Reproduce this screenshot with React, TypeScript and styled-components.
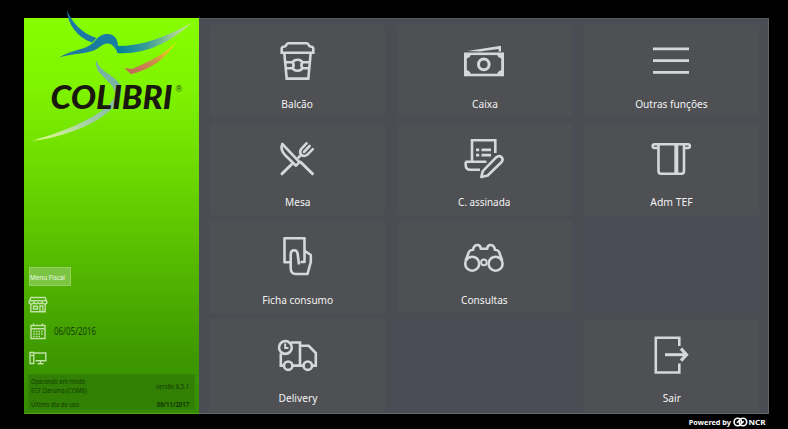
import React from "react";
import styled, { createGlobalStyle } from "styled-components";

const Global = createGlobalStyle`
  * { box-sizing: border-box; }
  body { margin: 0; background: #000; font-family: "Noto Sans", "Open Sans", sans-serif; overflow: hidden; }
`;

const Screen = styled.div`
  width: 788px;
  height: 429px;
  padding: 18px 19px 0 24px;
  background: #000;
  display: flex;
  flex-direction: column;
`;

const Main = styled.main`
  display: flex;
  height: 396px;
`;

const Sidebar = styled.aside`
  position: relative;
  width: 175px;
  height: 396px;
  padding: 249px 4px 3px;
  display: flex;
  flex-direction: column;
  background: linear-gradient(#86fe00 0%, #7ff300 18%, #6bd800 40%, #55b900 62%, #3f9b00 84%, #348b00 100%);
  border-bottom: 1px solid #55a51c;
`;

const Logo = styled.svg`
  position: absolute;
  left: 0;
  top: -18px;
`;

const FiscalButton = styled.button`
  width: 42px;
  height: 19px;
  margin-left: 1px;
  padding: 2px 0 0;
  border: 1px solid #93d35e;
  background: #7cc444;
  color: #eefbe2;
  font: 6.8px "Noto Sans", sans-serif;
  line-height: 15px;
  text-align: left;
  white-space: nowrap;
`;

const StatusList = styled.div`
  display: flex;
  flex-direction: column;
  margin-top: 4px;
  height: 85px;
`;

const StatusRow = styled.div`
  display: flex;
  align-items: center;
  height: 27px;
  gap: 6px;
`;

const StatusIcon = styled.svg`
  width: 20px;
  height: 20px;
  fill: none;
  stroke: #bfe2a5;
  stroke-width: 1.4;
`;

const Fit = styled.span<{ $x: number; $origin?: string }>`
  display: inline-block;
  white-space: nowrap;
  transform: scaleX(${(p) => p.$x});
  transform-origin: ${(p) => p.$origin ?? "left"} center;
`;

const DateText = styled.div`
  font-size: 10.5px;
  line-height: 12px;
  color: #153d05;
`;

const Info = styled.section`
  width: 167px;
  height: 36px;
  padding: 2px 5px 0 2px;
  background: #317f05;
  border: 1px solid #348609;
  color: #123c02;
  font-size: 7.8px;
  line-height: 9px;
  display: flex;
  flex-direction: column;
  gap: 5px;
`;

const InfoRow = styled.div`
  display: flex;
  align-items: center;
  justify-content: space-between;
`;

const Menu = styled.nav`
  width: 570px;
  height: 396px;
  padding: 6px 10px 6px 11px;
  display: grid;
  grid-template-columns: repeat(3, 175px);
  grid-template-rows: repeat(4, 92px);
  column-gap: 12px;
  row-gap: 6px;
  background: #4b4d54;
  border-top: 1px solid #56575a;
  border-right: 1px solid #62636a;
  border-bottom: 1px solid #66676b;
`;

const Tile = styled.button`
  display: flex;
  flex-direction: column;
  align-items: center;
  padding: 12px 0 0;
  border: 0;
  background: #4f5053;
  color: #f3f3f4;
  font: 11px "Noto Sans", sans-serif;
`;

const EmptyCell = styled.div`
  background: #4a4d56;
`;

const TileIcon = styled.svg`
  width: 49px;
  height: 48px;
  flex: none;
  fill: none;
  stroke: #d6d7d9;
  stroke-width: 2.6;
`;

const TileLabel = styled.span`
  margin-top: 11px;
  line-height: 15px;
`;

const Footer = styled.footer`
  display: flex;
  justify-content: flex-end;
  align-items: center;
  height: 15px;
  padding: 1px 3px 0 0;
  color: #fff;
  font: bold 7.3px "Noto Sans", sans-serif;
  gap: 2px;
`;

type Item = { label: string; fit: number; icon: React.ReactNode } | null;

const items: Item[] = [
  {
    label: "Balcão",
    fit: 0.92,
    icon: (
      <>
        <path d="M8.7 15.7V11.5Q8.8 9.8 11.5 9.5Q13.2 9 13.8 7.2Q14.3 6.2 15.5 6.2H33.5Q34.7 6.2 35.2 7.2Q35.8 9 37.5 9.5Q40.2 9.8 40.3 11.5V15.7Z" />
        <path d="M11.3 16L13.7 41.6H35.3L37.7 16M12.5 25.2H19.6Q21 22.7 24.5 22.7T29.4 25.2H36.5M13.2 31.2H19.6Q21 33.7 24.5 33.7T29.4 31.2H36" />
        <path d="M19.6 25.2Q21.7 28.2 19.6 31.2M29.4 25.2Q27.3 28.2 29.4 31.2" />
      </>
    ),
  },
  {
    label: "Caixa",
    fit: 0.92,
    icon: (
      <>
        <rect x="5.3" y="16.8" width="37.4" height="21.2" />
        <path d="M5 16H11Q11 20.5 6.5 21.5V33Q11 34 11 38.5H5ZM43 16H37Q37 20.5 41.5 21.5V33Q37 34 37 38.5H43Z" fill="#d6d7d9" stroke="none" />
        <circle cx="23.8" cy="27.4" r="5.3" strokeWidth="3" />
        <path d="M7.5 14L41 8.8V14.4H38.6V12L20 14.4Z" fill="#d6d7d9" stroke="none" />
      </>
    ),
  },
  { label: "Outras funções", fit: 0.92, icon: <path d="M6 11.8H42M6 23.6H42M6 35.3H42" strokeWidth="2.8" /> },
  {
    label: "Mesa",
    fit: 0.92,
    icon: (
      <g strokeLinecap="round" strokeLinejoin="round">
        <path d="M9.3 9C7.5 13 9 17 12.5 20.5L23 30.7L26.5 27.2Z" />
        <path d="M27.5 27L39.5 38.7M9 38.8L18.5 29.5" strokeWidth="3" />
        <path d="M33.5 8.3L28.3 13.8Q26 17 28.3 19.7Q31 22.2 34.2 19.8L39.8 14.2M36.6 11L31 17M27.5 20.5L25.5 22.5" />
      </g>
    ),
  },
  {
    label: "C. assinada",
    fit: 0.9,
    icon: (
      <>
        <path d="M12 26.8V5.2H35.3V18M5.5 26.8H26.5M5.7 26.8V30Q5.7 34.8 10.5 34.8H20" />
        <path d="M16 14.8H19.2M21.5 14.8H31M16 20.2H19.2M21.5 20.2H31" strokeWidth="2.8" />
        <path d="M21.3 42L22.8 36.2L36.4 22.2Q38.8 20 41.4 22Q43.7 24.4 41.6 27L27.7 40.5Z" strokeLinejoin="round" />
      </>
    ),
  },
  {
    label: "Adm TEF",
    fit: 0.94,
    icon: (
      <>
        <path d="M11 13H7.5Q5.5 13 5.7 11Q5.7 9.3 7.5 9.3H41Q42.8 9.3 42.8 11Q43 13 41 13H37.5M11.5 10V36Q11.5 38.7 14 38.7H34.5Q37 38.7 37 36V10" />
        <path d="M29.3 10V38" strokeWidth="4" />
      </>
    ),
  },
  {
    label: "Ficha consumo",
    fit: 0.915,
    icon: (
      <g strokeLinejoin="round">
        <path d="M17 29.2H11.5V5.3H31.5V29H27.5" />
        <path d="M26 31.5L24.6 20.5Q24 17.3 21 17.3Q18 17.3 17.7 21V35Q17.7 41 22.5 41H34.5L37.8 29V22L32 18" />
      </g>
    ),
  },
  {
    label: "Consultas",
    fit: 0.92,
    icon: (
      <>
        <circle cx="12.2" cy="30.7" r="7" />
        <circle cx="35.6" cy="30.7" r="7" />
        <circle cx="23.9" cy="29.4" r="2.8" strokeWidth="2" />
        <path d="M5.6 27.5L9 18.8Q10.2 16.8 13 16.8Q13.9 12 17.5 12Q20.5 12 20.9 15.7H27.1Q27.5 12 30.5 12Q34.1 12 35 16.8Q37.8 16.8 39 18.8L42.2 27.5" />
      </>
    ),
  },
  null,
  {
    label: "Delivery",
    fit: 0.93,
    icon: (
      <>
        <circle cx="12.4" cy="16.5" r="6.4" />
        <circle cx="15.2" cy="34.7" r="4.2" />
        <circle cx="34.8" cy="34.7" r="4.2" />
        <path d="M12.2 12.5V17H15.5" strokeWidth="2" />
        <path d="M18 11.5H27V34.5M27 14.8H35.7L42.8 22V34.6H39.5M7.8 22.5V34.6H11M19.5 34.6H30.5" />
      </>
    ),
  },
  null,
  {
    label: "Sair",
    fit: 0.92,
    icon: (
      <>
        <path d="M32.3 15V6.7H8.8V41.5H32.3V32.5" />
        <path d="M18 23.7H38" strokeWidth="3" />
        <path d="M34 17.7L39.5 23.7L34 29.7" strokeWidth="3.2" />
      </>
    ),
  },
];

function ColibriLogo() {
  return (
    <Logo width="175" height="150" viewBox="24 0 175 150">
      <defs>
        <linearGradient id="wing" x1="0" x2="1">
          <stop offset="0" stopColor="#007f9b" />
          <stop offset="0.4" stopColor="#3a9d98" />
          <stop offset="0.75" stopColor="#a0cc96" />
          <stop offset="1" stopColor="#c6f08e" />
        </linearGradient>
        <linearGradient id="flame" x1="0" x2="1" y1="1" y2="0">
          <stop offset="0" stopColor="#bf625d" />
          <stop offset="0.5" stopColor="#cf8f48" />
          <stop offset="1" stopColor="#fff000" />
        </linearGradient>
        <linearGradient id="tail" x1="0.8" x2="0" y1="0" y2="1">
          <stop offset="0" stopColor="#6fae9f" />
          <stop offset="0.5" stopColor="#9ccaa8" />
          <stop offset="1" stopColor="#e8ff90" />
        </linearGradient>
        <linearGradient id="beak" x1="0" x2="1">
          <stop offset="0" stopColor="#2377a0" />
          <stop offset="1" stopColor="#167ea2" />
        </linearGradient>
      </defs>
      <path d="M67 10C71 21 82 34 96.5 38L92 42.5C77 37 68 25 67 10Z" fill="#1c76a6" />
      <path d="M59 57.5C73 49 87 50 94 42C99 35.5 104 33 110 34.3C118 36.5 118.5 44 118 52.5L115.5 49C111 41 104 42.5 99 47.5C91 54 80 52 59 57.5Z" fill="url(#beak)" />
      <path d="M117 46C142 46 164 38 192 22.5C169 44 143 55 117 53Z" fill="url(#wing)" />
      <path d="M124.5 68L132 69C151 61 165 54 176.5 41.5C165 59.5 151 69 131 74.3Z" fill="url(#flame)" />
      <path d="M96.5 60C100 74 118 75 121 87.5C124 112 77 136 32 140.8C73 129 108 112 114.5 97C119 82 92 76 96.5 60Z" fill="url(#tail)" />
      <text x="50.5" y="109" fontFamily="Lato, sans-serif" fontWeight="900" fontStyle="italic" fontSize="32" textLength="122" lengthAdjust="spacingAndGlyphs" fill="#1a180e">
        COLIBRI
      </text>
      <text x="175.8" y="91.5" fontFamily="Liberation Sans" fontSize="8.5" fill="#22400b">®</text>
    </Logo>
  );
}

export default function App() {
  return (
    <>
      <Global />
      <Screen>
        <Main>
          <Sidebar>
            <ColibriLogo />
            <FiscalButton><Fit $x={0.93}>Menu Fiscal</Fit></FiscalButton>
            <StatusList>
              <StatusRow>
                <StatusIcon viewBox="0 0 20 20">
                  <path d="M3 3.5H17L19 8Q19 10 16.5 10Q14.5 10 14 8.5Q12 11 10 8.7Q8 11 6 8.5Q5.5 10 3.5 10Q1 10 1 8ZM2 6.7H18M2.8 10V17.7H17.2V10M5.5 12.2H9.5V15H5.5ZM12 17V12H14.8V17" />
                </StatusIcon>
              </StatusRow>
              <StatusRow>
                <StatusIcon viewBox="0 0 20 20">
                  <path d="M3 4.5H17V17.5H3ZM3 7.7H17M5.5 2.5V5M14.5 2.5V5" />
                  <path d="M5.2 10.5H15M5.2 13H15M5.2 15.4H12" strokeDasharray="1.6 1" />
                </StatusIcon>
                <DateText><Fit $x={0.75}>06/05/2016</Fit></DateText>
              </StatusRow>
              <StatusRow>
                <StatusIcon viewBox="0 0 20 20">
                  <path d="M2 4.5H5.8V15.5H2ZM5.8 5H17.8V12.8H7.5M12.5 13V15.5M9.5 15.7H15.5M3 7.5H5" />
                </StatusIcon>
              </StatusRow>
            </StatusList>
            <Info>
              <InfoRow>
                <div>
                  <div><Fit $x={0.73}>Operando em modo</Fit></div>
                  <div><Fit $x={0.75}>ECF Daruma (COM8)</Fit></div>
                </div>
                <Fit $x={0.75} $origin="right">versão 8.5.1</Fit>
              </InfoRow>
              <InfoRow>
                <Fit $x={0.75}>Último dia de uso</Fit>
                <Fit $x={0.77} $origin="right"><b>06/11/2017</b></Fit>
              </InfoRow>
            </Info>
          </Sidebar>
          <Menu>
            {items.map((item, i) =>
              item ? (
                <Tile key={i}>
                  <TileIcon viewBox="0 0 49 48">{item.icon}</TileIcon>
                  <TileLabel><Fit $x={item.fit} $origin="center">{item.label}</Fit></TileLabel>
                </Tile>
              ) : (
                <EmptyCell key={i} />
              )
            )}
          </Menu>
        </Main>
        <Footer>
          <span>Powered by</span>
          <svg width="33" height="10" viewBox="0 0 33 10" fill="none" stroke="#fff" strokeWidth="1.6">
            <circle cx="4.8" cy="5" r="3.7" />
            <circle cx="10" cy="5" r="3.7" />
            <path d="M4 5.8L6.3 3.5M8.4 6.5L10.7 4.2" />
            <text x="15.5" y="7.8" fontFamily="Noto Sans" fontWeight="bold" fontSize="7.6" textLength="17" lengthAdjust="spacingAndGlyphs" fill="#fff" stroke="none">NCR</text>
          </svg>
        </Footer>
      </Screen>
    </>
  );
}
